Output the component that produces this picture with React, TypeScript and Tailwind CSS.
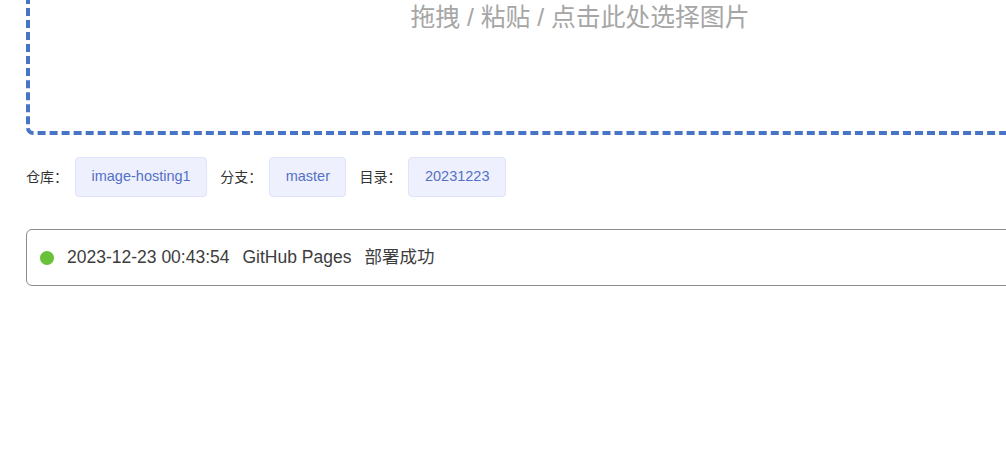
import React from 'react';

const FONT = { fontFamily: '"Liberation Sans", "Noto Sans CJK SC", sans-serif' };

const TAGS = [
    { label: '仓库：', value: 'image-hosting1' },
    { label: '分支：', value: 'master' },
    { label: '目录：', value: '20231223' },
];

export default function App() {
    return (
        <div className="w-full h-[451px] overflow-hidden bg-white" style={FONT}>
            <div className="ml-[26px] w-[1108px]">
                {/* upload drop zone */}
                <div className="-mt-[20px] h-[155px] rounded-[7px] border-4 border-dashed border-[#4874c6] pt-[18px] text-center">
                    <p className="text-[24.8px] leading-[32px] text-[#a6a6a6]">拖拽 / 粘贴 / 点击此处选择图片</p>
                </div>

                {/* repo info */}
                <div className="mt-[22px] flex items-center">
                    {TAGS.map(tag => (
                        <div key={tag.label} className="flex items-center mr-[13px]">
                            <span className="w-[42px] text-[14px] text-[#333]">{tag.label}</span>
                            <span className="ml-[7px] h-[40px] px-[15.5px] flex items-center rounded-[4px] border border-[#dfe3fb] bg-[#eef0fe] text-[14.5px] text-[#5470c6]">
                                {tag.value}
                            </span>
                        </div>
                    ))}
                </div>

                {/* deploy status */}
                <div className="mt-[32px] h-[57px] rounded-[6px] border border-[#8c8c8c] flex items-center pl-[13px] gap-[13px] text-[17.5px] text-[#3d3d3d]">
                    <span className="w-[14px] h-[14px] rounded-full bg-[#67c23a] shrink-0" />
                    <span>2023-12-23 00:43:54</span>
                    <span>GitHub Pages</span>
                    <span>部署成功</span>
                </div>
            </div>
        </div>
    );
}
